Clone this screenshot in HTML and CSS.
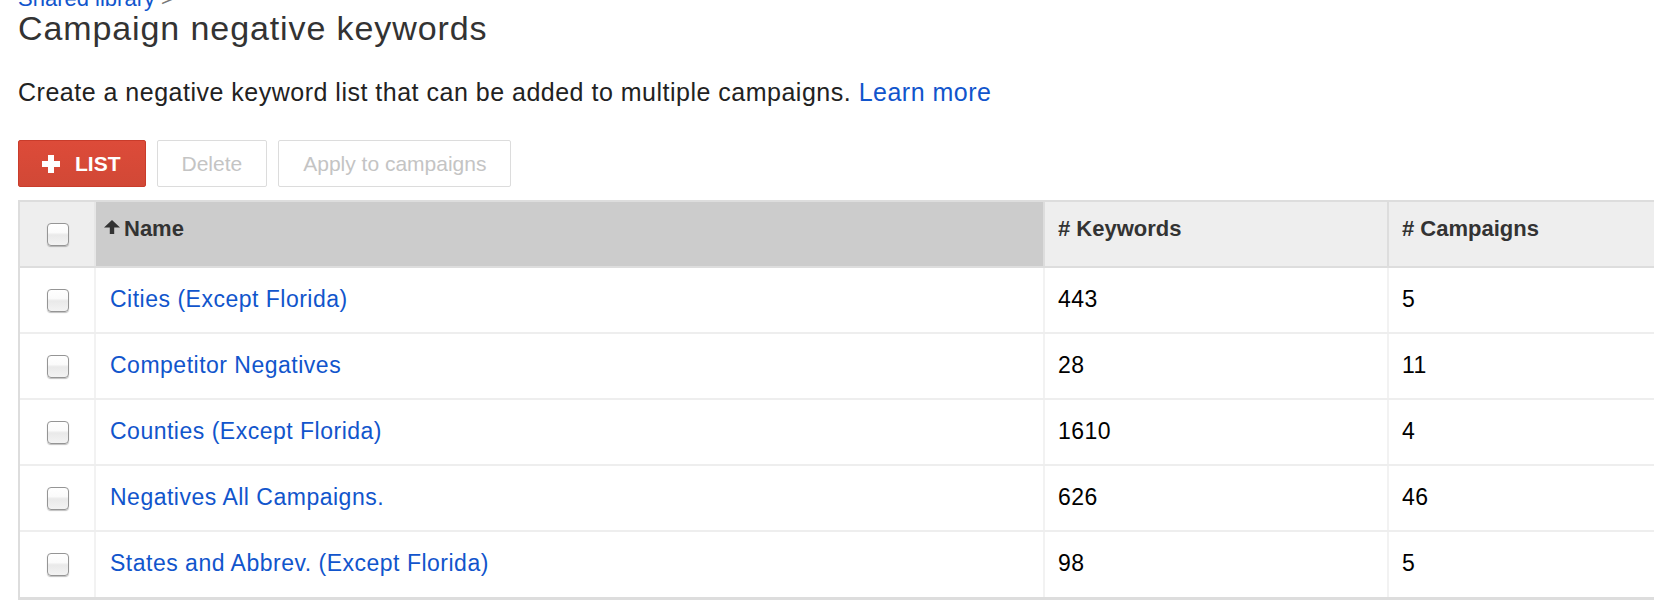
FILE: index.html
```html
<!DOCTYPE html>
<html lang="en">
<head>
<meta charset="utf-8">
<title>Campaign negative keywords</title>
<link rel="stylesheet" href="styles.css">
</head>
<body>
<div class="page">
  <div class="crumb"><a href="#">Shared library</a> <span class="chev">&gt;</span></div>
  <h1 class="title">Campaign negative keywords</h1>
  <p class="desc">Create a negative keyword list that can be added to multiple campaigns. <a href="#">Learn more</a></p>

  <div class="toolbar">
    <button class="btn btn-primary" type="button">
      <svg class="plus" width="18" height="18" viewBox="0 0 18 18" aria-hidden="true"><path d="M6 0h6v6h6v6h-6v6H6v-6H0V6h6z" fill="#fff"/></svg>
      <span>LIST</span>
    </button>
    <button class="btn btn-ghost" type="button">Delete</button>
    <button class="btn btn-ghost" type="button">Apply to campaigns</button>
  </div>

  <div class="grid" role="table">
    <div class="row head" role="row">
      <div class="cell cbcell" role="columnheader"><span class="cb"></span></div>
      <div class="cell sorted" role="columnheader">
        <svg class="arrow" width="16" height="14" viewBox="0 0 16 14" aria-hidden="true"><path d="M8 0L16 7.5H10.2V14H5.8V7.5H0Z" fill="#333"/></svg>
        <span>Name</span>
      </div>
      <div class="cell" role="columnheader"># Keywords</div>
      <div class="cell" role="columnheader"># Campaigns</div>
    </div>
    <div class="row" role="row">
      <div class="cell cbcell"><span class="cb"></span></div>
      <div class="cell"><a href="#">Cities (Except Florida)</a></div>
      <div class="cell num">443</div>
      <div class="cell num">5</div>
    </div>
    <div class="row" role="row">
      <div class="cell cbcell"><span class="cb"></span></div>
      <div class="cell"><a href="#">Competitor Negatives</a></div>
      <div class="cell num">28</div>
      <div class="cell num">11</div>
    </div>
    <div class="row" role="row">
      <div class="cell cbcell"><span class="cb"></span></div>
      <div class="cell"><a href="#">Counties (Except Florida)</a></div>
      <div class="cell num">1610</div>
      <div class="cell num">4</div>
    </div>
    <div class="row" role="row">
      <div class="cell cbcell"><span class="cb"></span></div>
      <div class="cell"><a href="#">Negatives All Campaigns.</a></div>
      <div class="cell num">626</div>
      <div class="cell num">46</div>
    </div>
    <div class="row last" role="row">
      <div class="cell cbcell"><span class="cb"></span></div>
      <div class="cell"><a href="#">States and Abbrev. (Except Florida)</a></div>
      <div class="cell num">98</div>
      <div class="cell num">5</div>
    </div>
  </div>
</div>
</body>
</html>
```

FILE: styles.css
```css
html, body {
  margin: 0;
  padding: 0;
  background: #fff;
  overflow: hidden;
}

body {
  width: 1654px;
  height: 602px;
  font-family: "Liberation Sans", Arial, sans-serif;
  color: #333;
}

.page {
  padding-left: 18px;
}

.crumb {
  margin-top: -14px;
  font-size: 22px;
  line-height: 26px;
}

.crumb a {
  color: #15c;
  text-decoration: none;
}

.crumb .chev {
  color: #777;
}

.title {
  margin: -4px 0 0;
  font-size: 34px;
  line-height: 40px;
  font-weight: normal;
  color: #333;
  letter-spacing: 0.9px;
}

.desc {
  margin: 29px 0 0;
  font-size: 25px;
  line-height: 30px;
  color: #222;
  letter-spacing: 0.5px;
}

.desc a {
  color: #15c;
  text-decoration: none;
}

.toolbar {
  margin-top: 33px;
  display: flex;
  gap: 11px;
}

.btn {
  box-sizing: border-box;
  height: 47px;
  display: inline-flex;
  align-items: center;
  padding: 0 24px;
  border-radius: 2px;
  font-family: "Liberation Sans", Arial, sans-serif;
  font-size: 21px;
  margin: 0;
}

.btn-primary {
  background: linear-gradient(#dd4b39, #d14836);
  border: 1px solid #c93c2b;
  color: #fff;
  font-weight: bold;
  gap: 15px;
  padding: 0 24px 0 23px;
}

.btn-ghost {
  background: #fff;
  border: 1px solid #dcdcdc;
  color: #c4c4c4;
}

.grid {
  margin-top: 13px;
  width: 1782px;
  border-top: 2px solid #ddd;
  border-left: 2px solid #ddd;
  border-bottom: 3px solid #ddd;
}

.row {
  display: grid;
  grid-template-columns: 74px 949px 344px 413px;
  height: 66px;
  box-sizing: border-box;
  border-bottom: 2px solid #eee;
}

.row.last {
  height: 65px;
  border-bottom: 0;
}

.cell {
  box-sizing: border-box;
  border-left: 2px solid #f2f2f2;
  padding: 18px 13px 0 14px;
  font-size: 23px;
  line-height: 26px;
  letter-spacing: 0.5px;
  color: #000;
}

.cell a {
  color: #15c;
  text-decoration: none;
}

.cell.num {
  padding-left: 13px;
}

.cbcell {
  border-left: 0;
  padding: 0 0 0 2px;
  display: flex;
  align-items: center;
  justify-content: center;
}

.cb {
  display: block;
  width: 22px;
  height: 23px;
  box-sizing: border-box;
  border: 1px solid #959595;
  border-radius: 4px;
  background: linear-gradient(#ffffff 0%, #fbfbfb 40%, #e9e9e9 52%, #f3f3f3 100%);
  box-shadow: 0 1px 1px rgba(0, 0, 0, 0.25);
}

.row.head {
  height: 66px;
  border-bottom: 2px solid #ddd;
}

.head .cell {
  background: #eee;
  border-left-color: #ddd;
  padding: 14px 13px 0 13px;
  font-size: 22px;
  line-height: 26px;
  font-weight: bold;
  letter-spacing: 0;
  color: #333;
}

.head .cbcell {
  padding: 0 0 0 2px;
}

.head .cell.sorted {
  background: #ccc;
  border-left-color: #e6e6e6;
  padding-left: 8px;
  display: flex;
  align-items: flex-start;
  gap: 4px;
}

.arrow {
  margin-top: 4px;
  flex: none;
}
```
